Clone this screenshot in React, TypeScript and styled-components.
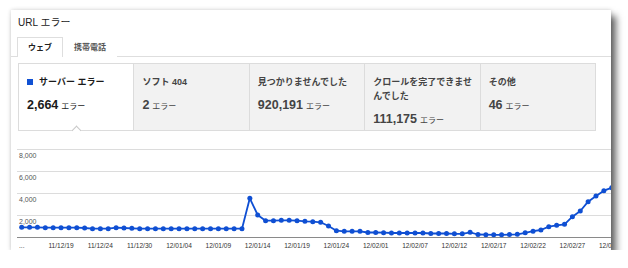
import React from 'react'
import styled, { createGlobalStyle } from 'styled-components'

const GlobalStyle = createGlobalStyle`
  html, body {
    margin: 0;
    padding: 0;
    background: #fff;
  }
  body {
    font-family: "Liberation Sans", "Noto Sans CJK JP", sans-serif;
    color: #222;
  }
`

const Panel = styled.div`
  margin: 10px 0 0 11px;
  width: 600px;
  height: 240px;
  background: #fff;
  overflow: hidden;
  box-shadow: 5px 6px 7px rgba(0, 0, 0, 0.6), 0 0 4px rgba(0, 0, 0, 0.18);
`

const Title = styled.div`
  padding: 6px 0 0 7px;
  font-size: 10px;
  line-height: 14px;
  color: #222;
`

const TabBar = styled.div`
  display: flex;
  margin-top: 7px;
  padding-left: 6px;
  border-bottom: 1px solid #dedede;
`

const Tab = styled.div<{ $active?: boolean }>`
  padding: 0 10px;
  line-height: 19px;
  font-size: 8px;
  font-weight: bold;
  color: ${({ $active }) => ($active ? '#222' : '#555')};
  background: #fff;
  border: 1px solid ${({ $active }) => ($active ? '#dedede' : 'transparent')};
  border-bottom: 0;
  margin-bottom: -1px;
`

const CardRow = styled.div`
  display: flex;
  height: 66px;
  margin: 6px 15px 0 7px;
  border: 1px solid #dcdcdc;
`

const Card = styled.div<{ $selected?: boolean }>`
  position: relative;
  flex: 1;
  padding: 11px 4px 0 8px;
  background: ${({ $selected }) => ($selected ? '#fff' : '#f2f2f2')};
  color: ${({ $selected }) => ($selected ? '#1a1a1a' : '#444')};

  & + & {
    border-left: 1px solid #dcdcdc;
  }

  ${({ $selected }) =>
    $selected &&
    `
    &::after {
      content: '';
      position: absolute;
      left: calc(50% - 3.5px);
      bottom: -4px;
      width: 6px;
      height: 6px;
      background: #fff;
      border-top: 1px solid #c8c8c8;
      border-left: 1px solid #c8c8c8;
      transform: rotate(45deg);
      z-index: 2;
    }
  `}
`

const CardLabel = styled.div`
  display: flex;
  align-items: center;
  font-size: 9px;
  line-height: 14px;
  font-weight: bold;
`

const Swatch = styled.span`
  width: 6px;
  height: 6px;
  margin-right: 6px;
  background: #1151d3;
  flex: none;
`

const CardValue = styled.div`
  margin-top: 7px;
  line-height: 16px;
  white-space: nowrap;
`

const Count = styled.span`
  font-size: 12.5px;
  font-weight: bold;
`

const Unit = styled.span`
  margin-left: 3px;
  font-size: 8px;
`

const Chart = styled.svg`
  display: block;
  margin: 9px 0 0 6px;
  font-family: "Liberation Sans", sans-serif;
`

const cards = [
  { label: 'サーバー エラー', count: '2,664', selected: true },
  { label: 'ソフト 404', count: '2' },
  { label: '見つかりませんでした', count: '920,191' },
  { label: 'クロールを完了できませんでした', count: '111,175' },
  { label: 'その他', count: '46' },
]

// y positions (page px) of each day's point
const pageY = [
  227.3, 227.3, 227.3, 227.7, 227.7, 227.7, 227.7, 227.7, 228, 228.7,
  228.7, 228.7, 227.7, 228, 228.3, 228.7, 228.7, 228.7, 228.7, 228.7,
  228.7, 228.7, 228.7, 228.7, 228.7, 228.7, 228.7, 228.7, 228.7, 198.3,
  215, 220.7, 220.7, 220.3, 220.3, 220.7, 221.3, 221.7, 222.3, 226,
  230.7, 231.3, 231.3, 231.3, 232.5, 232.5, 232.7, 233, 233, 233,
  233, 233, 233.5, 233.5, 233.5, 233.8, 233.8, 232.3, 234.5, 234.7,
  234.8, 234.8, 234.6, 234.3, 232.8, 231.2, 230, 226.7, 225.3, 224.3,
  216.7, 211, 201.7, 196, 190.7, 187.7,
]

const xLabels = [
  '11/12/19', '11/12/24', '11/12/30', '12/01/04', '12/01/09', '12/01/14', '12/01/19',
  '12/01/24', '12/02/01', '12/02/07', '12/02/12', '12/02/17', '12/02/22', '12/02/27', '12/03/03',
]

const STEP = 7.867
const px = (i: number) => 4.7 + i * STEP
const points = pageY.map((y, i) => ({ x: px(i), y: y - 140 }))

const gridLines = [
  { y: 9.5, label: '8,000' },
  { y: 31.5, label: '6,000' },
  { y: 53.5, label: '4,000' },
  { y: 75.5, label: '2,000' },
]

function ErrorChart() {
  const path = points.map((p, i) => `${i === 0 ? 'M' : 'L'}${p.x.toFixed(1)} ${p.y.toFixed(1)}`).join(' ')
  return (
    <Chart width={594} height={110} viewBox="0 0 594 110">
      {gridLines.map((g) => (
        <g key={g.label}>
          <line x1={0} x2={594} y1={g.y} y2={g.y} stroke="#dcdcdc" strokeWidth={1} />
          <text x={2} y={g.y + 8} fontSize={7} fill="#555">
            {g.label}
          </text>
        </g>
      ))}
      <line x1={0} x2={594} y1={97.5} y2={97.5} stroke="#8a8a8a" strokeWidth={1} />
      <path d={path} fill="none" stroke="#0f4fd3" strokeWidth={1.8} strokeLinejoin="round" />
      {points.map((p, i) => (
        <circle key={i} cx={p.x} cy={p.y} r={2.5} fill="#0f4fd3" />
      ))}
      <text x={2} y={108} fontSize={6.6} fill="#333">
        ...
      </text>
      {xLabels.map((t, i) => (
        <text key={t} x={px((i + 1) * 5)} y={108} fontSize={6.6} fill="#333" textAnchor="middle">
          {t}
        </text>
      ))}
    </Chart>
  )
}

export default function App() {
  return (
    <>
      <GlobalStyle />
      <Panel>
        <Title>URL エラー</Title>
        <TabBar>
          <Tab $active>ウェブ</Tab>
          <Tab>携帯電話</Tab>
        </TabBar>
        <CardRow>
          {cards.map((c) => (
            <Card key={c.label} $selected={c.selected}>
              <CardLabel>
                {c.selected && <Swatch />}
                <span>{c.label}</span>
              </CardLabel>
              <CardValue>
                <Count>{c.count}</Count>
                <Unit>エラー</Unit>
              </CardValue>
            </Card>
          ))}
        </CardRow>
        <ErrorChart />
      </Panel>
    </>
  )
}
